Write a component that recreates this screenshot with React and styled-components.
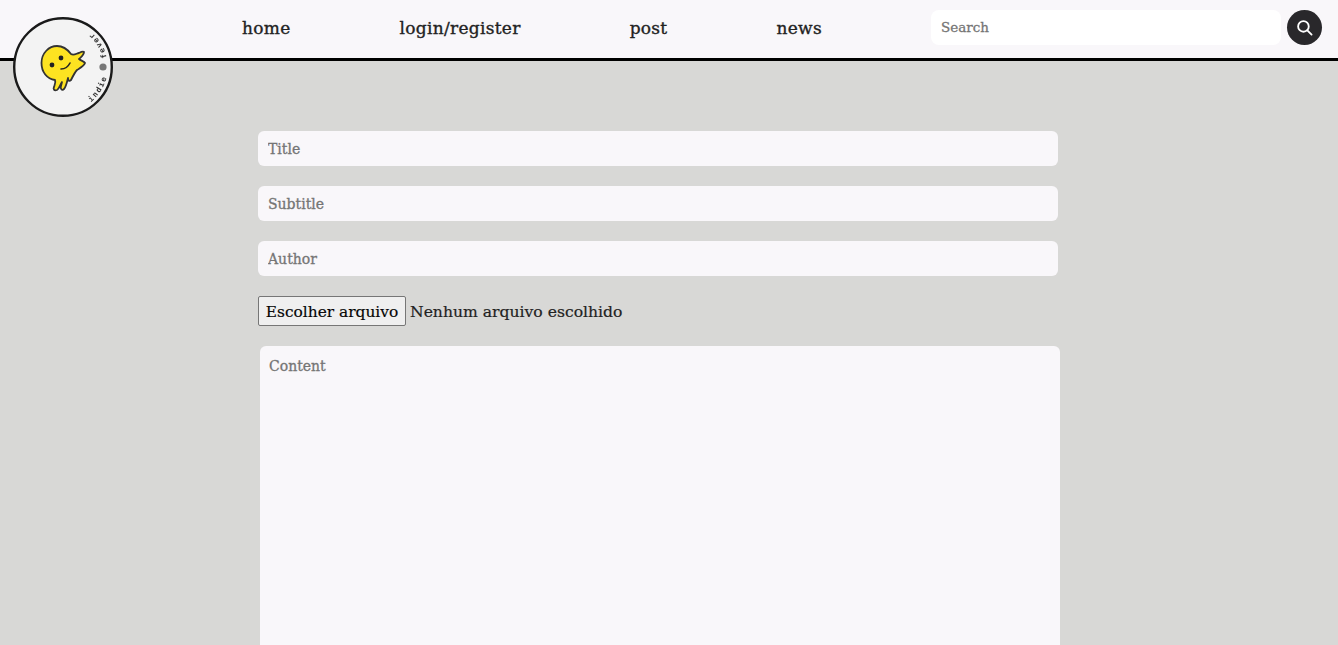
import styled, { createGlobalStyle } from 'styled-components';

const GlobalStyle = createGlobalStyle`
	html, body {
		margin: 0;
		padding: 0;
		height: 100%;
		overflow: hidden;
		background: #d8d8d6;
		font-family: "DejaVu Serif", "Liberation Serif", serif;
	}
`;

const Header = styled.header`
	position: relative;
	height: 58px;
	box-sizing: content-box;
	display: flex;
	justify-content: flex-end;
	align-items: center;
	gap: 109px;
	padding-right: 16px;
	background: #f9f7fa;
	border-bottom: 3px solid #000;
`;

const Logo = styled.div`
	position: absolute;
	left: 13px;
	top: 17px;
	width: 100px;
	height: 100px;

	svg {
		display: block;
		filter: blur(0.35px);
	}
`;

const NavLink = styled.a`
	font-size: 17px;
	letter-spacing: 0.3px;
	-webkit-text-stroke: 0.35px #222;
	color: #222;
	text-decoration: none;
	margin-top: -2px;
`;

const SearchForm = styled.form`
	display: flex;
	align-items: center;
	gap: 6px;
	margin-top: -3px;
`;

const SearchInput = styled.input`
	width: 350px;
	height: 35px;
	box-sizing: border-box;
	padding: 0 10px 2px;
	border: none;
	border-radius: 8px;
	background: #fff;
	font: inherit;
	font-size: 13.5px;

	&::placeholder {
		color: #757575;
		-webkit-text-stroke: 0.3px #757575;
	}
`;

const SearchButton = styled.button`
	width: 35px;
	height: 35px;
	padding: 0;
	border: none;
	border-radius: 50%;
	background: #29282b;
	display: flex;
	align-items: center;
	justify-content: center;
`;

const PostForm = styled.form`
	width: 800px;
	margin: 70px 0 0 258px;
	display: flex;
	flex-direction: column;
	gap: 20px;
`;

const Field = styled.input`
	width: 100%;
	height: 35px;
	box-sizing: border-box;
	padding: 0 10px;
	border: none;
	border-radius: 6px;
	background: #f9f7fa;
	font: inherit;
	font-size: 14px;

	&::placeholder {
		color: #757575;
		-webkit-text-stroke: 0.3px #757575;
	}
`;

const FileRow = styled.div`
	display: flex;
	align-items: center;
	gap: 4px;
	height: 30px;
	font-size: 15.6px;
	color: #222;
	-webkit-text-stroke: 0.2px #222;
`;

const FileButton = styled.button`
	height: 30px;
	width: 148px;
	padding: 1px 0 0;
	box-sizing: border-box;
	border: 1px solid #767676;
	border-radius: 2px;
	background: #efefef;
	color: #000;
	font: inherit;
	font-size: 15.4px;
`;

const FileStatus = styled.span`
	padding-top: 1px;
`;

const ContentArea = styled.textarea`
	width: 800px;
	height: 400px;
	margin-left: 2px;
	box-sizing: border-box;
	padding: 12px 9px;
	border: none;
	border-radius: 6px;
	background: #f9f7fa;
	font: inherit;
	font-size: 14px;
	resize: none;

	&::placeholder {
		color: #757575;
		-webkit-text-stroke: 0.3px #757575;
	}
`;

const LogoMark = () => (
	<svg width="100" height="100" viewBox="0 0 100 100">
		<defs>
			<path id="logo-ring" d="M 78 85 A 45 45 0 0 0 78 15" />
		</defs>
		<circle cx="50" cy="50" r="48.8" fill="#f3f3f3" stroke="#1a1a1a" strokeWidth="2.4" />
		<path
			d="M28.5 46 C28.5 36 36 29 44 29 C51 29 55 33 58 37 C61 39 64 36 66 36 C68 35 70 34 71 35 C71 38 68 40 66 42 C68 44 71 44 72 46 C71 49 67 51 64 53 C62 55 60 59 58 63 C56 65 55 63 55 61 C54 65 53 70 51 72 C49 74 47 72 48 69 L49 65 C47 68 46 72 44 73 C41 74 40 72 41 70 C42 67 43 65 42 63 C34 62 28.5 55 28.5 46 Z"
			fill="#fde321"
			stroke="#333"
			strokeWidth="1.8"
			strokeLinejoin="round"
		/>
		<circle cx="39" cy="48" r="2.4" fill="#222" />
		<circle cx="48" cy="41" r="2.4" fill="#222" />
		<path d="M48 52 Q54 52 57 46" fill="none" stroke="#222" strokeWidth="1.6" strokeLinecap="round" />
		<circle cx="90" cy="50" r="3.6" fill="#777" />
		<text fontFamily="DejaVu Sans Mono, monospace" fontSize="7.6" fontWeight="700" fill="#333" letterSpacing="1.6">
			<textPath href="#logo-ring">{'indie\u00a0\u00a0\u00a0fever'}</textPath>
		</text>
	</svg>
);

const SearchIcon = () => (
	<svg width="17" height="17" viewBox="0 0 24 24" fill="none" stroke="#fff" strokeWidth="2.6" strokeLinecap="round">
		<circle cx="10.5" cy="10.5" r="7.5" />
		<path d="M16 16l6 6" />
	</svg>
);

const App = () => (
	<>
		<GlobalStyle />
		<Header>
			<Logo>
				<LogoMark />
			</Logo>
			<NavLink href="#">home</NavLink>
			<NavLink href="#">login/register</NavLink>
			<NavLink href="#">post</NavLink>
			<NavLink href="#">news</NavLink>
			<SearchForm>
				<SearchInput placeholder="Search" />
				<SearchButton type="button">
					<SearchIcon />
				</SearchButton>
			</SearchForm>
		</Header>
		<PostForm>
			<Field placeholder="Title" />
			<Field placeholder="Subtitle" />
			<Field placeholder="Author" />
			<FileRow>
				<FileButton type="button">Escolher arquivo</FileButton>
				<FileStatus>Nenhum arquivo escolhido</FileStatus>
			</FileRow>
			<ContentArea placeholder="Content" />
		</PostForm>
	</>
);

export default App;
